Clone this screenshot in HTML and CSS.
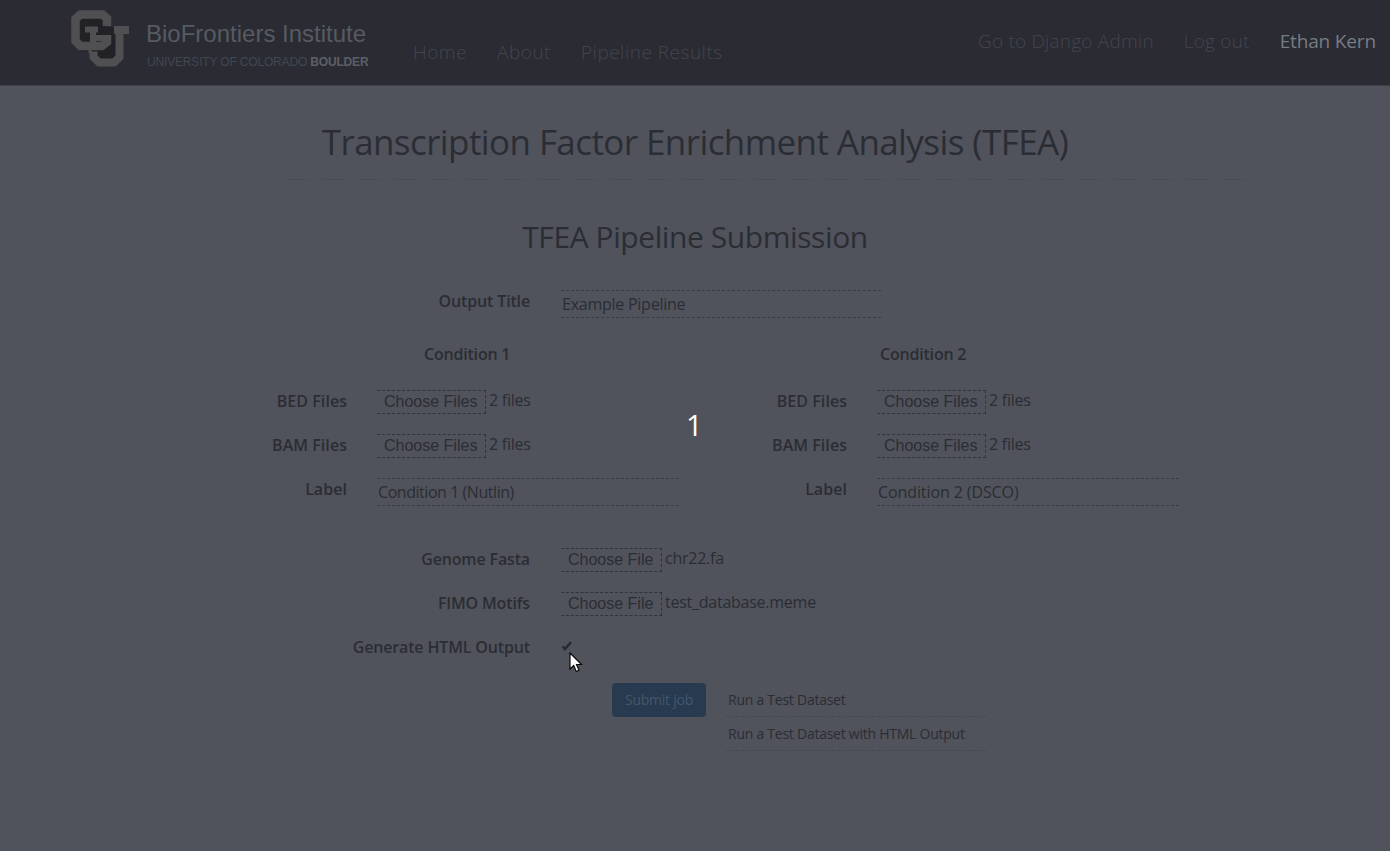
FILE: index.html
```html
<!DOCTYPE html>
<html lang="en">
<head>
<meta charset="utf-8">
<title>TFEA Pipeline</title>
<link rel="stylesheet" href="styles.css">
</head>
<body>
<header class="navbar">
  <a class="brand">
    <svg class="logo" width="60" height="60" viewBox="10 9 60 60">
      <path d="M18 16H46V27H56V60H36V48H18Z" fill="#222226"/>
      <g fill="none" stroke="#505053" stroke-width="8.5">
        <path d="M33.5 48V57L39 62.5H54L59.5 57V30M54 30H69" stroke-width="8"/>
        <path d="M46 46H20" stroke="#222226" stroke-width="11"/>
        <path d="M47 26V18.5L42.5 14.5H20.5L15.5 19V41L20.5 46H42L47 42V35"/>
        <path d="M25 29.5H38M33 30V44M34 38H47" stroke-width="6"/>
        <path d="M30 47V53" stroke-width="3"/>
      </g>
    </svg>
    <span class="brand-text">
      <span class="brand-name">BioFrontiers Institute</span>
      <span class="brand-sub"><span class="brand-uni">UNIVERSITY OF COLORADO</span> <b>BOULDER</b></span>
    </span>
  </a>
  <nav class="nav-main"><a>Home</a><a>About</a><a>Pipeline Results</a></nav>
  <nav class="nav-user"><a>Go to Django Admin</a><a>Log out</a><a class="user">Ethan Kern</a></nav>
</header>
<main class="page">
  <h1>Transcription Factor Enrichment Analysis (TFEA)</h1>
  <div class="rule"></div>
  <h2>TFEA Pipeline Submission</h2>
  <form>
    <div class="row wide title-row"><label>Output Title</label><div class="text-input">Example Pipeline</div></div>
    <div class="conditions">
      <section>
        <h3 class="first">Condition 1</h3>
        <div class="row"><label>BED Files</label><div class="file"><span class="choose">Choose Files</span><span>2 files</span></div></div>
        <div class="row"><label>BAM Files</label><div class="file"><span class="choose">Choose Files</span><span>2 files</span></div></div>
        <div class="row"><label>Label</label><div class="text-input nutlin">Condition 1 (Nutlin)</div></div>
      </section>
      <section>
        <h3 class="second">Condition 2</h3>
        <div class="row"><label>BED Files</label><div class="file"><span class="choose">Choose Files</span><span>2 files</span></div></div>
        <div class="row"><label>BAM Files</label><div class="file"><span class="choose">Choose Files</span><span>2 files</span></div></div>
        <div class="row"><label>Label</label><div class="text-input">Condition 2 (DSCO)</div></div>
      </section>
    </div>
    <div class="options">
      <div class="row wide"><label>Genome Fasta</label><div class="file"><span class="choose single">Choose File</span><span>chr22.fa</span></div></div>
      <div class="row wide"><label>FIMO Motifs</label><div class="file"><span class="choose single">Choose File</span><span>test_database.meme</span></div></div>
      <div class="row wide"><label>Generate HTML Output</label><div class="check"><svg width="12" height="12" viewBox="0 0 12 12"><path d="M1.5 6.5L4 9L10 2" fill="none" stroke="#292b32" stroke-width="2.6"/></svg></div></div>
    </div>
    <div class="actions">
      <div class="submit">Submit job</div>
      <div class="tests"><div class="test">Run a Test Dataset</div><div class="test">Run a Test Dataset with HTML Output</div></div>
    </div>
  </form>
</main>
<div class="countdown">1</div>
<svg class="cursor" width="14" height="21" viewBox="0 0 14 21"><path d="M1 1V17L4.7 13.5L7.3 19.5L10 18.3L7.5 12.5H12.5Z" fill="#fff" stroke="#090a0c" stroke-width="1.2"/></svg>
</body>
</html>
```
FILE: styles.css
```css
* { box-sizing: border-box; }
body { margin: 0; width: 1390px; height: 851px; overflow: hidden; background: #50535b; color: #2b2d34; font: 16px/24px "Open Sans", sans-serif; letter-spacing: -.25px; }
.navbar { height: 86px; background: #2a2b33; border-bottom: 1px solid #3c414b; display: flex; align-items: flex-start; padding: 0 14px 0 70px; color: #44464c; letter-spacing: 0; }
.brand { display: flex; gap: 16px; padding-top: 9px; width: 343px; }
.brand-text { display: flex; flex-direction: column; font-family: "Liberation Sans", sans-serif; white-space: nowrap; }
.brand-name { font-size: 24px; line-height: 30px; margin-top: 10px; color: #565b62; letter-spacing: 0; }
.brand-sub { font-size: 12px; line-height: 14px; margin: 6px 0 0 1px; color: #414852; letter-spacing: -.17px; }
.brand-sub b { color: #5b6067; }
.nav-main { display: flex; gap: 30px; padding-top: 38px; font-size: 19px; line-height: 28px; font-weight: 300; letter-spacing: .5px; }
.nav-user { display: flex; gap: 30px; margin-left: auto; padding-top: 27px; font-size: 19px; line-height: 28px; font-weight: 300; letter-spacing: .2px; }
.user { color: #777c83; font-weight: 400; letter-spacing: -.15px; }
.page { width: 1000px; margin: 0 auto; }
h1, h2, h3 { margin: 0; font-weight: 400; text-align: center; white-space: nowrap; }
h1 { font-size: 35px; line-height: 50px; padding-top: 31px; letter-spacing: -.59px; }
.rule { height: 1px; margin: 12px -50px 0 90px; background: repeating-linear-gradient(90deg, #494d59 0 24px, #50535b 24px 36px); }
h2 { font-size: 30px; line-height: 40px; margin-top: 37px; letter-spacing: -.42px; }
.row { display: grid; grid-template-columns: 152px 302px; column-gap: 30px; height: 44px; white-space: nowrap; }
.row.wide { grid-template-columns: 335px 320px; column-gap: 31px; }
.title-row { margin-top: 32px; }
label { text-align: right; font-weight: 600; letter-spacing: -.15px; }
.row:not(.wide) label { letter-spacing: .05px; }
.text-input { height: 28px; margin-top: 1px; padding: 1px 0 0 1px; border: dashed #393c44; border-width: 1px 0; }
.row:not(.wide) .text-input { margin-top: 0; letter-spacing: -.1px; }
.row:not(.wide) .nutlin { letter-spacing: -.45px; }
.conditions { display: grid; grid-template-columns: 500px 500px; margin-top: 9px; }
h3 { font-size: 16px; font-weight: 600; text-align: left; line-height: 24px; margin-bottom: 23px; letter-spacing: -.2px; }
.row:not(.wide) .text-input { margin-top: 1px; }
.first { padding-left: 229px; }
.second { padding-left: 185px; }
.file { display: flex; gap: 3px; line-height: 22px; }
.choose { font-family: "Liberation Sans", sans-serif; width: 109px; height: 24px; margin-top: 1px; padding-left: 6px; line-height: 21px; letter-spacing: 0; border: 1px dashed #30333a; border-left-color: transparent; }
.single { width: 101px; }
.options { margin-top: 26px; }
.check { padding-top: 5px; }
.check svg { display: block; }
.actions { display: flex; align-items: flex-start; margin-top: 4px; padding-left: 417px; gap: 20px; font-size: 14px; line-height: 34px; }
.submit { width: 94px; height: 34px; border-radius: 4px; background: #283a4f; color: #42576c; text-align: center; line-height: 34px; }
.test { height: 34px; width: 260px; padding-left: 2px; border-bottom: 1px dashed #464951; white-space: nowrap; }
.countdown { position: absolute; left: 686px; top: 409px; font: 29px/32px "Open Sans", sans-serif; color: #fff; }
.cursor { position: absolute; left: 569px; top: 652px; }
```
